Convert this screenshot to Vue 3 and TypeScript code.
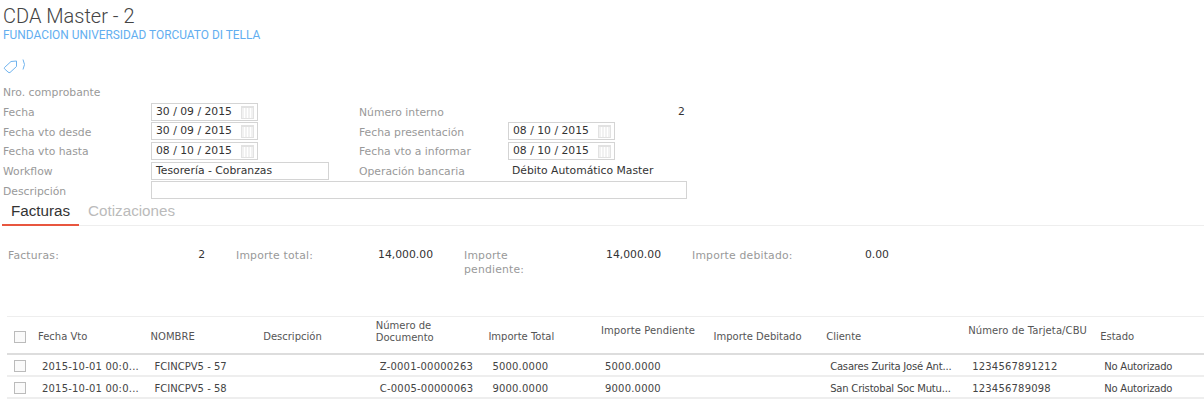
<script setup lang="ts">
interface Column {
  label: string
  cls?: string
}

interface Row {
  fecha: string
  nombre: string
  descripcion: string
  numero: string
  total: string
  pendiente: string
  debitado: string
  cliente: string
  tarjeta: string
  estado: string
}

const columns: Column[] = [
  { label: 'Fecha Vto' },
  { label: 'NOMBRE' },
  { label: 'Descripción' },
  { label: 'Número de Documento', cls: 'wrap' },
  { label: 'Importe Total' },
  { label: 'Importe Pendiente', cls: 'high' },
  { label: 'Importe Debitado' },
  { label: 'Cliente' },
  { label: 'Número de Tarjeta/CBU', cls: 'high' },
  { label: 'Estado' },
]

const rows: Row[] = [
  {
    fecha: '2015-10-01 00:0...',
    nombre: 'FCINCPV5 - 57',
    descripcion: '',
    numero: 'Z-0001-00000263',
    total: '5000.0000',
    pendiente: '5000.0000',
    debitado: '',
    cliente: 'Casares Zurita José Ant...',
    tarjeta: '1234567891212',
    estado: 'No Autorizado',
  },
  {
    fecha: '2015-10-01 00:0...',
    nombre: 'FCINCPV5 - 58',
    descripcion: '',
    numero: 'C-0005-00000063',
    total: '9000.0000',
    pendiente: '9000.0000',
    debitado: '',
    cliente: 'San Cristobal Soc Mutu...',
    tarjeta: '123456789098',
    estado: 'No Autorizado',
  },
]

const totals = [
  { label: 'Facturas:', value: '2' },
  { label: 'Importe total:', value: '14,000.00' },
  { label: 'Importe pendiente:', value: '14,000.00' },
  { label: 'Importe debitado:', value: '0.00' },
]
</script>

<template>
  <div class="page">
    <h1 class="title">CDA Master - 2</h1>
    <a class="company">FUNDACION UNIVERSIDAD TORCUATO DI TELLA</a>

    <div class="tags">
      <svg width="15" height="14" viewBox="0 0 15 14" fill="none" stroke="#6fb3ee" stroke-width="1">
        <path d="M1.5 7.5 L8 1.5 L13.5 1 L13.5 6.5 L7 12.5 Q6 13 5 12 L1.5 8.8 Q1 8.1 1.5 7.5 Z" />
      </svg>
      <svg class="chev" width="5" height="11" viewBox="0 0 5 11" fill="none" stroke="#6fb3ee" stroke-width="1">
        <path d="M1 0.5 Q4 5.5 1 10.5" />
      </svg>
    </div>

    <div class="form">
      <div class="row first">
        <span class="label">Nro. comprobante</span>
      </div>
      <div class="row">
        <span class="label">Fecha</span>
        <div class="date">30 / 09 / 2015<i class="cal" /></div>
        <span class="label second">Número interno</span>
        <span class="value-num">2</span>
      </div>
      <div class="row">
        <span class="label">Fecha vto desde</span>
        <div class="date">30 / 09 / 2015<i class="cal" /></div>
        <span class="label second">Fecha presentación</span>
        <div class="date">08 / 10 / 2015<i class="cal" /></div>
      </div>
      <div class="row">
        <span class="label">Fecha vto hasta</span>
        <div class="date">08 / 10 / 2015<i class="cal" /></div>
        <span class="label second">Fecha vto a informar</span>
        <div class="date">08 / 10 / 2015<i class="cal" /></div>
      </div>
      <div class="row">
        <span class="label">Workflow</span>
        <div class="box workflow">Tesorería - Cobranzas</div>
        <span class="label second short">Operación bancaria</span>
        <span class="plain">Débito Automático Master</span>
      </div>
      <div class="row">
        <span class="label">Descripción</span>
        <div class="box descr" />
      </div>
    </div>

    <div class="tabs">
      <span class="tab active">Facturas</span>
      <span class="tab">Cotizaciones</span>
    </div>

    <div class="totals">
      <div v-for="t in totals" :key="t.label" class="total">
        <span class="total-label">{{ t.label }}</span>
        <span class="total-value">{{ t.value }}</span>
      </div>
    </div>

    <table class="grid">
      <colgroup>
        <col class="c-check" />
        <col class="c-date" />
        <col class="c-std" />
        <col class="c-std" />
        <col class="c-std" />
        <col class="c-std" />
        <col class="c-std" />
        <col class="c-std" />
        <col class="c-client" />
        <col class="c-card" />
        <col />
      </colgroup>
      <thead>
        <tr>
          <th class="check"><i class="cb" /></th>
          <th v-for="c in columns" :key="c.label" :class="c.cls">{{ c.label }}</th>
        </tr>
      </thead>
      <tbody>
        <tr v-for="r in rows" :key="r.nombre">
          <td class="check"><i class="cb" /></td>
          <td class="wide">{{ r.fecha }}</td>
          <td>{{ r.nombre }}</td>
          <td>{{ r.descripcion }}</td>
          <td class="wide">{{ r.numero }}</td>
          <td class="wide">{{ r.total }}</td>
          <td class="wide">{{ r.pendiente }}</td>
          <td>{{ r.debitado }}</td>
          <td class="tight">{{ r.cliente }}</td>
          <td class="wide">{{ r.tarjeta }}</td>
          <td class="tight">{{ r.estado }}</td>
        </tr>
      </tbody>
    </table>
  </div>
</template>

<style>
html,
body {
  margin: 0;
  background: #fff;
  overflow: hidden;
}
</style>

<style scoped>
.page {
  width: 1204px;
  height: 408px;
  overflow: hidden;
  font-family: 'DejaVu Sans', Verdana, sans-serif;
  font-size: 10.8px;
  color: #333;
  box-sizing: border-box;
  padding-top: 4px;
}
.title {
  margin: 0 0 0 3px;
  font-family: Roboto, sans-serif;
  font-weight: 300;
  font-size: 20px;
  line-height: 24px;
  color: #444;
}
.company {
  display: block;
  margin-left: 3px;
  font-family: Roboto, sans-serif;
  font-size: 11.9px;
  line-height: 14px;
  color: #62aef0;
}
.tags {
  display: flex;
  align-items: flex-start;
  gap: 4px;
  margin: 18px 0 0 3px;
  height: 18px;
}
.chev {
  margin-top: -1px;
}
.form {
  display: flex;
  flex-direction: column;
  margin-top: 4px;
}
.row {
  display: flex;
  align-items: center;
  height: 19.7px;
  padding-left: 3px;
}
.label {
  width: 148px;
  margin-top: 2px;
  color: #999;
  flex: none;
}
.label.second {
  width: 149px;
  margin-left: 101px;
}
.label.second.short {
  margin-left: 30px;
}
.date,
.box {
  box-sizing: border-box;
  border: 1px solid #d4d4d4;
  height: 18px;
  line-height: 16px;
  flex: none;
  color: #333;
}
.date {
  width: 107px;
  padding-left: 4px;
  position: relative;
}
.cal {
  position: absolute;
  right: 3px;
  top: 2px;
  width: 13px;
  height: 13px;
  border: 1px solid #e2e2e2;
  border-top-width: 2px;
  box-sizing: border-box;
  background: repeating-linear-gradient(90deg, #f1f1f1 0 2px, #fff 2px 3px);
}
.box.workflow {
  width: 178px;
  padding-left: 4px;
}
.box.descr {
  width: 536px;
}
.plain {
  margin-left: 4px;
}
.value-num {
  margin-left: 170px;
}
.tabs {
  display: flex;
  height: 26px;
  margin: -1px 0 0 2px;
  border-bottom: 1px solid #eee;
}
.tab {
  font-family: 'Liberation Sans', Arial, sans-serif;
  font-size: 15.2px;
  line-height: 23px;
  padding: 0 9px;
  color: #bbb;
}
.tab.active {
  color: #333;
  border-bottom: 2px solid #e8563f;
  box-sizing: border-box;
  height: 27px;
}
.totals {
  display: flex;
  margin-top: 22px;
  padding-left: 8px;
  height: 68px;
}
.total {
  display: flex;
  align-items: flex-start;
  width: 228px;
}
.total-label {
  width: 103px;
  color: #999;
  line-height: 14px;
  margin-top: 1px;
  letter-spacing: 0.2px;
}
.total-value {
  width: 94px;
  text-align: right;
  line-height: 14px;
}
.grid {
  margin-left: 7px;
  width: 1197px;
  table-layout: fixed;
  border-collapse: collapse;
  border-top: 1px solid #eee;
  font-size: 10px;
}
.c-check {
  width: 27px;
}
.c-date {
  width: 112.6px;
}
.c-std {
  width: 112.6px;
}
.c-client {
  width: 142px;
}
.c-card {
  width: 132px;
}
th {
  height: 37px;
  padding: 14px 0 0 4px;
  text-align: left;
  font-weight: normal;
  color: #555;
  line-height: 12px;
  border-bottom: 2px solid #ddd;
  box-sizing: border-box;
  vertical-align: top;
}
th.high {
  padding-top: 8px;
  letter-spacing: 0.1px;
}
th.wrap {
  padding-top: 3px;
}
th.check,
td.check {
  padding-left: 7px;
}
td {
  height: 22px;
  padding: 3px 0 0 8px;
  box-sizing: border-box;
  border-bottom: 2px solid #eee;
  color: #444;
  white-space: nowrap;
  overflow: hidden;
}
td.wide {
  letter-spacing: 0.2px;
}
td.tight {
  letter-spacing: -0.2px;
}
.cb {
  display: block;
  width: 10px;
  height: 10px;
  border: 1px solid #bbb;
  background: #fafafa;
}
</style>
